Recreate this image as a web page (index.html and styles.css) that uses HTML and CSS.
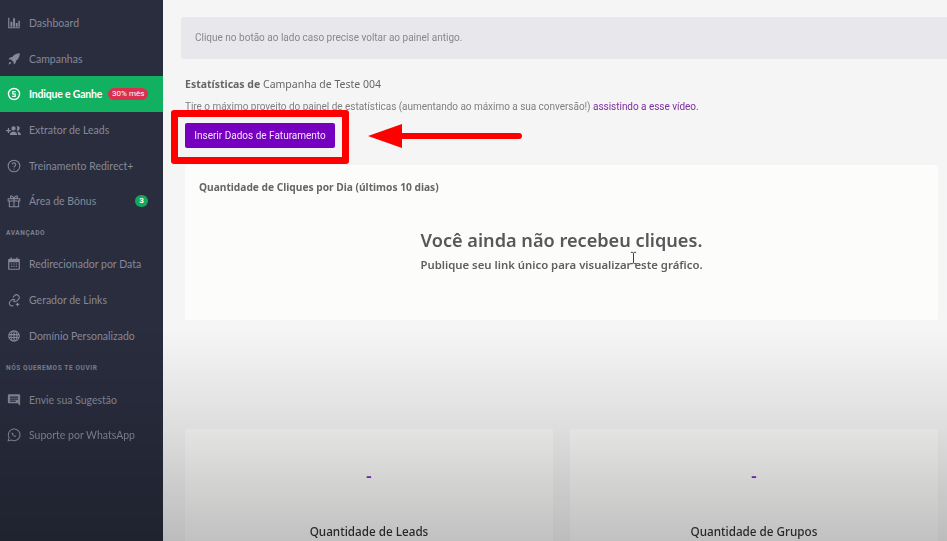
FILE: index.html
```html
<!DOCTYPE html>
<html lang="pt-BR">
<head>
<meta charset="utf-8">
<title>Estatísticas</title>
<link rel="stylesheet" href="styles.css">
</head>
<body>
<div class="app">
  <aside class="sidebar">
    <a class="item"><svg class="ic" viewBox="0 0 24 24"><path d="M2 3h2v18H2zM2 19.400h20V21H2zM6 10h3.200v8.500H6zM10.500 4h3.200v14.500h-3.200zM15 12h3.200v6.500H15zM19.500 8h2.500v10.500h-2.500z"/></svg><span>Dashboard</span></a>
    <a class="item"><svg class="ic" viewBox="0 0 24 24"><path d="M22 2c-6 .3-10 2.500-13 6.500l-4 .8-2.500 3 4.200.6 4.400 4.400.6 4.200 3-2.500.8-4C19.500 12 21.700 8 22 2zM5.500 16.500c-1.500.7-2.500 2.500-3 5 2.500-.5 4.300-1.500 5-3z"/></svg><span>Campanhas</span></a>
    <a class="item active"><svg class="ic" viewBox="0 0 24 24"><circle cx="12" cy="12" r="9.500" fill="none" stroke="currentColor" stroke-width="2.400"/><path d="M9 7h6v2h-4v2h4v6H9v-2h4v-2H9z"/></svg><span>Indique e Ganhe</span><b class="pill red">30% mês</b></a>
    <a class="item"><svg class="ic wide" viewBox="0 0 24 24"><path d="M0 11h3V8h2v3h3v2H5v3H3v-3H0zM12 5a3.500 3.500 0 1 1 0 7 3.500 3.500 0 0 1 0-7zM18.500 5a3.500 3.500 0 1 1-1.500 6.700A5 5 0 0 0 17 5.300 3.500 3.500 0 0 1 18.500 5zM6 19c0-3 3.500-5.500 6-5.500s6 2.500 6 5.500zM19.500 19c0-2-.7-4-2-5.500 3 0 6.500 2 6.500 5.500z"/></svg><span>Extrator de Leads</span></a>
    <a class="item"><svg class="ic line" viewBox="0 0 24 24"><circle cx="12" cy="12" r="10"/><path d="M9 9.500a3 3 0 1 1 4.500 2.600c-1 .6-1.500 1.200-1.500 2.400M12 16.500v2"/></svg><span>Treinamento Redirect+</span></a>
    <a class="item"><svg class="ic line" viewBox="0 0 24 24"><path d="M2 8h20v4H2zM4 12v10h16V12M12 8v14M12 8C10 3 6 2 6 5s3 3 6 3zM12 8c2-5 6-6 6-3s-3 3-6 3z"/></svg><span>Área de Bônus</span><b class="pill green">3</b></a>
    <div class="label">AVANÇADO</div>
    <a class="item"><svg class="ic" viewBox="0 0 24 24"><path fill-rule="evenodd" d="M6 1h2v2h8V1h2v2h2a2 2 0 0 1 2 2v15a2 2 0 0 1-2 2H4a2 2 0 0 1-2-2V5a2 2 0 0 1 2-2h2zM4 9v11h16V9zM7 11h2v2H7zm4 0h2v2h-2zm4 0h2v2h-2zM7 15h2v2H7zm4 0h2v2h-2zm4 0h2v2h-2z"/></svg><span>Redirecionador por Data</span></a>
    <a class="item"><svg class="ic line" viewBox="0 0 24 24"><path d="M10 7.500l3-3a4.500 4.500 0 0 1 6.500 6.500l-3 3a4.500 4.500 0 0 1-6-.5M14 12.500a4.500 4.500 0 0 0-6-.5l-3 3a4.500 4.500 0 0 0 6 6.500M18 16.500v6M15 19.500h6"/></svg><span>Gerador de Links</span></a>
    <a class="item"><svg class="ic" viewBox="0 0 24 24"><path fill-rule="evenodd" d="M12 2a10 10 0 1 1 0 20 10 10 0 0 1 0-20zM11 4c-1.500 1-2.600 3-3 4.500h3zm2 0v4.500h3C15.600 7 14.500 5 13 4zM8.700 4.700A8.500 8.500 0 0 0 4.600 8.500h1.900c.4-1.400 1.100-2.700 2.200-3.800zm6.600 0c1.100 1.100 1.800 2.400 2.200 3.800h1.900a8.500 8.500 0 0 0-4.100-3.800zM4 10.500v3h2.200v-3zm4 0v3h3v-3zm5 0v3h3v-3zm5 0v3h2v-3zM4.600 15.500a8.500 8.500 0 0 0 4.100 3.800c-1.100-1.100-1.800-2.400-2.200-3.800zm3.400 0c.4 1.500 1.500 3.500 3 4.500v-4.500zm5 0V20c1.500-1 2.600-3 3-4.500zm4.500 0c-.4 1.400-1.100 2.700-2.200 3.800a8.500 8.500 0 0 0 4.100-3.800z"/></svg><span>Domínio Personalizado</span></a>
    <div class="label second">NÓS QUEREMOS TE OUVIR</div>
    <a class="item"><svg class="ic" viewBox="0 0 24 24"><path fill-rule="evenodd" d="M3 2h18a1.500 1.500 0 0 1 1.500 1.500V22L18 17.500H3A1.500 1.500 0 0 1 1.500 16V3.500A1.500 1.500 0 0 1 3 2zM5 6v2h14V6zm0 3.500v2h14v-2zM5 13v2h10v-2z"/></svg><span>Envie sua Sugestão</span></a>
    <a class="item"><svg class="ic line" viewBox="0 0 24 24"><path d="M2 22l1.500-5.500A10 10 0 1 1 7.500 20.500z"/><path d="M8.500 7.500c-1 1-1 3 1.500 5.500s4.500 3 6 1.500l-2-2-1 1c-1-.4-2.100-1.500-2.500-2.500l1-1z" class="fillsolid"/></svg><span>Suporte por WhatsApp</span></a>
  </aside>
  <main class="main">
    <div class="notice">Clique no botão ao lado caso precise voltar ao painel antigo.</div>
    <div class="content">
      <h1 class="title"><strong>Estatísticas de</strong> Campanha de Teste 004</h1>
      <p class="hint">Tire o máximo proveito do painel de estatísticas (aumentando ao máximo a sua conversão!) <a class="link">assistindo a esse vídeo.</a></p>
      <button class="btn">Inserir Dados de Faturamento</button>
      <section class="card chart">
        <h2 class="card-title">Quantidade de Cliques por Dia (últimos 10 dias)</h2>
        <div class="empty">
          <div class="empty-big">Você ainda não recebeu cliques.</div>
          <div class="empty-small">Publique seu link único para visualizar este gráfico.</div>
        </div>
      </section>
      <div class="stats">
        <section class="card stat"><div class="dash">-</div><div class="stat-name">Quantidade de Leads</div></section>
        <section class="card stat"><div class="dash">-</div><div class="stat-name">Quantidade de Grupos</div></section>
      </div>
    </div>
  </main>
</div>
<div class="shade"></div>
<div class="mark"></div>
<svg class="arrow" viewBox="0 0 156 26"><path d="M0 13L34 1v9h117a3 3 0 0 1 0 6H34v9z"/></svg>
<svg class="cursor" viewBox="0 0 8 14"><path d="M1 .5h2l1 1 1-1h2M4 1.500v11M1 13.500h2l1-1 1 1h2" fill="none" stroke="#222" stroke-width="1"/></svg>
</body>
</html>
```
FILE: styles.css
```css
* { box-sizing: border-box; }
html, body { margin: 0; height: 100%; overflow: hidden; }
body { background: #f5f5f6; font-family: Roboto, "Liberation Sans", sans-serif; color: #666; }
.app { display: flex; height: 541px; overflow: hidden; filter: blur(.35px); }
.sidebar { width: 163px; flex: none; background: #2a2d3e; padding-top: 5.100px; color: #858998; font-family: Lato, "Noto Sans", sans-serif; }
.item { display: flex; align-items: center; height: 35.700px; padding: 0 15px 0 7px; font-size: 10.500px; white-space: nowrap; }
.item span { margin-left: 8px; }
.ic { width: 14px; height: 14px; flex: none; fill: currentColor; }
.ic.wide { width: 15px; height: 15px; margin-left: -1px; }
.ic.line { fill: none; stroke: currentColor; stroke-width: 1.800; }
.fillsolid { fill: currentColor; stroke: none; }
.item.active { background: #12b161; color: #fff; font-weight: 700; letter-spacing: -.2px; padding-right: 0; height: 36px; margin-bottom: -.3px; padding-bottom: 1px; }
.pill { border-radius: 7px; color: #fff; font-size: 8px; font-weight: 400; letter-spacing: 0; font-family: Roboto, sans-serif; line-height: 12px; text-align: center; }
.pill.red { background: #d9304f; width: 40px; margin-left: 6px; height: 12px; }
.pill.green { background: #12a85d; width: 13px; height: 12px; margin-left: auto; font-weight: 700; }
.label { height: 27.100px; line-height: 29px; padding-left: 6px; font-size: 6.500px; font-weight: 700; letter-spacing: .6px; color: #7d8190; font-family: Roboto, sans-serif; white-space: nowrap; }
.label.second { height: 28.500px; line-height: 30px; }
.main { flex: 1; min-width: 0; padding: 17px 0 0 18px; }
.notice { height: 42px; line-height: 41px; background: #e8e8ec; padding-left: 14px; font-size: 10px; color: #888; border-radius: 3px 0 0 3px; }
.content { padding: 0 9px 0 4px; }
.title { margin: 18px 0 0; font-size: 10.500px; line-height: 15px; font-weight: 400; color: #666; font-family: "Noto Sans", sans-serif; }
.title strong { font-weight: 700; }
.hint { margin: 8px 0 0; font-size: 10px; line-height: 14px; color: #808080; letter-spacing: -.03px; white-space: nowrap; }
.link { color: #7b2d9e; }
.btn { display: block; margin-top: 9px; width: 150px; height: 25px; padding: 0; border: 0; border-radius: 2px; background: #7500bf; color: #f4e4fb; font: 400 10px Roboto, sans-serif; }
.card { background: #fcfcfb; border-radius: 2px; }
.chart { margin-top: 17px; height: 155px; padding: 15px 14px 0; }
.card-title { margin: 0; font: 700 10.200px/14px "Noto Sans", sans-serif; color: #666; }
.empty { margin-top: 33px; text-align: center; font-family: "Noto Sans", sans-serif; }
.empty-big { font-size: 18.150px; line-height: 26px; font-weight: 600; color: #58585a; }
.empty-small { font-size: 11.350px; line-height: 22px; font-weight: 600; color: #5f5f61; margin-top: 1px; }
.stats { display: grid; grid-template-columns: 368px 368px; gap: 17px; margin-top: 109px; }
.stat { height: 160px; text-align: center; padding-top: 37px; }
.dash { font: 700 17px/20px Lato, sans-serif; color: #7a2ad0; }
.stat-name { margin-top: 37px; font: 500 11.700px/16px "Noto Sans", sans-serif; color: #333; }
.shade { position: absolute; left: 0; right: 0; top: 330px; bottom: 0; background: linear-gradient(to bottom, rgba(0,0,0,0) 0%, rgba(0,0,0,.08) 40%, rgba(0,0,0,.23) 100%); pointer-events: none; }
.mark { position: absolute; left: 171px; top: 110px; width: 178px; height: 54px; border: 7px solid #fe0000; border-radius: 3px; }
.arrow { position: absolute; left: 368px; top: 123px; width: 156px; height: 26px; fill: #fe0000; }
.cursor { position: absolute; left: 630px; top: 251px; width: 7px; height: 14px; }
```
